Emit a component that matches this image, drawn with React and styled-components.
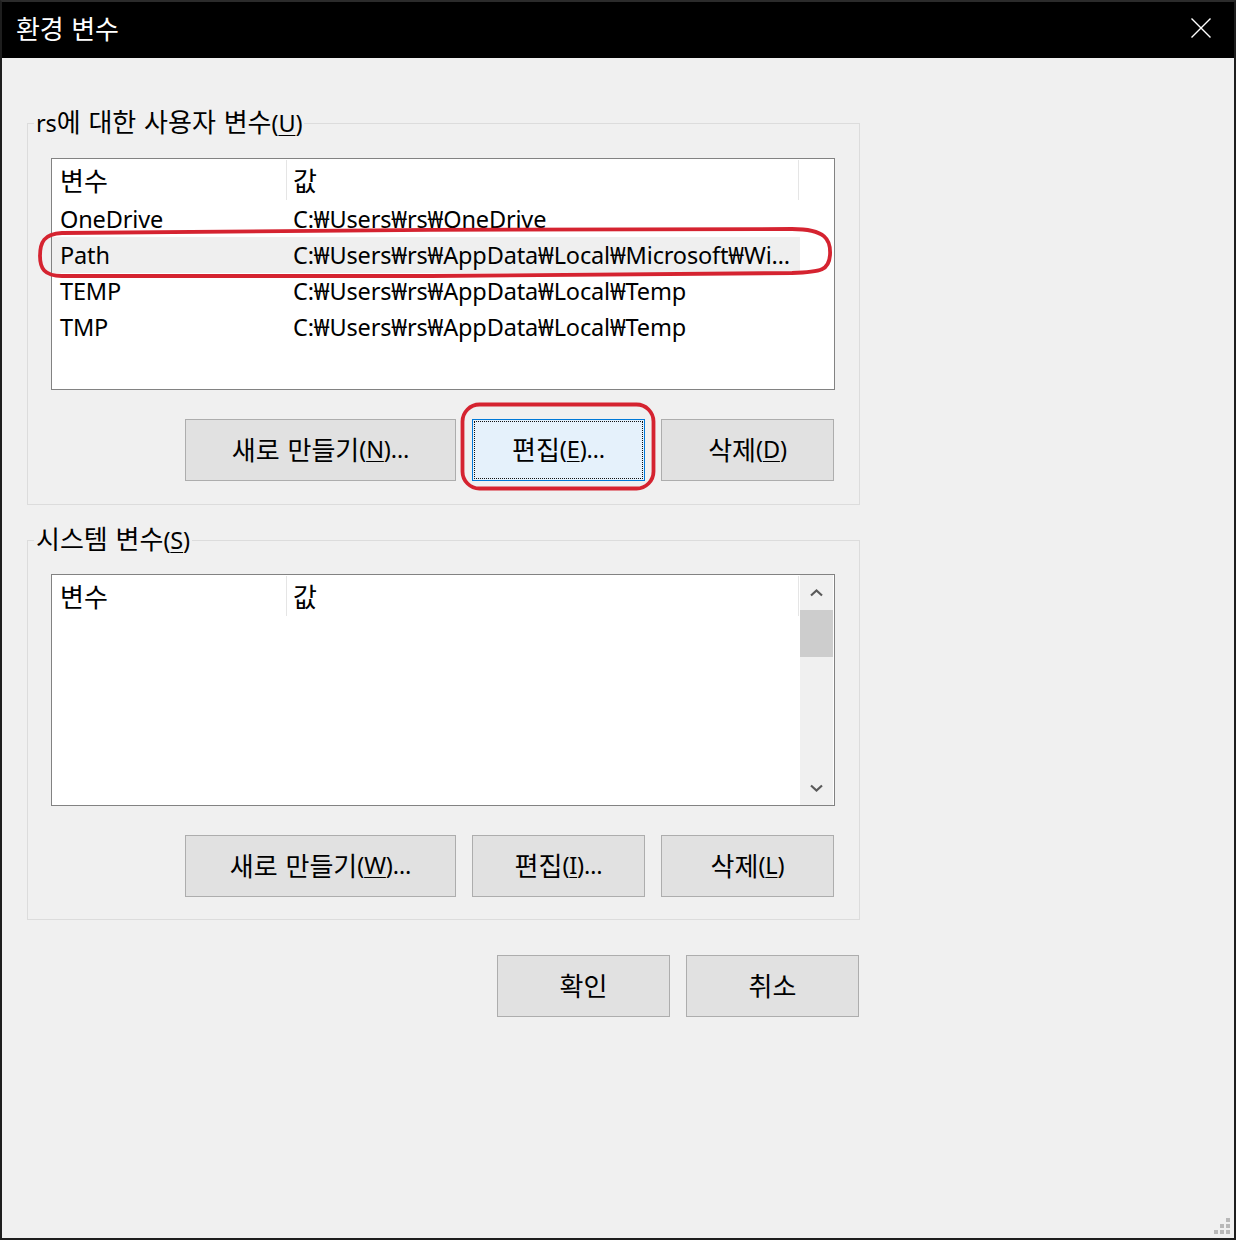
import React from 'react';
import styled, { createGlobalStyle, css } from 'styled-components';

const Global = createGlobalStyle`
  html, body { margin: 0; padding: 0; background: #f0f0f0; }
  body { font-family: "Noto Sans", "Noto Sans CJK KR", sans-serif; }
  * { box-sizing: border-box; }
`;

const Root = styled.div`
  position: relative;
  width: 1236px;
  height: 1240px;
`;

const Window = styled.div`
  position: relative;
  width: 1236px;
  height: 1240px;
  border: 2px solid #1e1e1e;
  border-top-color: #2b2b2b;
  background: #f0f0f0;
  display: flex;
  flex-direction: column;
  overflow: hidden;
  font-family: "Noto Sans", "Noto Sans CJK KR", sans-serif;
  font-size: 23.5px;
  letter-spacing: -0.15px;
  color: #000;
`;

const Ko = styled.span`
  font-family: "Noto Sans CJK KR", sans-serif;
  font-size: 26px;
  letter-spacing: 0;
  word-spacing: 2px;
`;

const TitleBar = styled.div`
  height: 56px;
  flex: none;
  background: #000;
  color: #fff;
  display: flex;
  align-items: center;
  justify-content: space-between;
  padding: 0 23px 4px 14px;
`;

const Title = styled.span`
  font-family: "Noto Sans CJK KR", sans-serif;
  font-size: 26px;
  line-height: 1;
  word-spacing: 2px;
`;

const CloseIcon = styled.svg`
  width: 20px;
  height: 20px;
`;

const Body = styled.div`
  flex: 1;
  display: flex;
  flex-direction: column;
  align-items: flex-start;
  padding: 65px 0 0 25px;
`;

const Group = styled.section`
  position: relative;
  width: 833px;
  border: 1px solid #dcdcdc;
  padding: ${p => p.$pt}px 24px ${p => p.$pb}px 23px;
  margin-top: ${p => p.$mt}px;
`;

const GroupLabel = styled.div`
  position: absolute;
  top: -21px;
  left: 6px;
  padding: 0 2px;
  background: #f0f0f0;
  line-height: 36px;
  white-space: nowrap;
`;

const Mn = styled.span`
  text-decoration: underline;
  text-decoration-thickness: 1px;
  text-underline-offset: 3px;
`;

const ListBox = styled.div`
  width: 784px;
  height: 232px;
  border: 1px solid #828282;
  background: #fff;
  display: flex;
`;

const ListMain = styled.div`
  width: 748px;
  display: flex;
  flex-direction: column;
`;

const Header = styled.div`
  height: 42px;
  display: flex;
  flex: none;
`;

const HeaderCell = styled.div`
  width: ${p => p.$w}px;
  padding-left: ${p => p.$pl}px;
  display: flex;
  align-items: center;
  border-right: 1px solid #e5e5e5;
  margin: 1px 0;
  padding-bottom: 2px;
`;

const Row = styled.div`
  height: 36px;
  display: flex;
  align-items: center;
  padding-bottom: 1px;
  background: ${p => (p.$selected ? '#efefef' : 'transparent')};
`;

const Cell = styled.div`
  width: ${p => p.$w}px;
  padding-left: ${p => p.$pl}px;
  white-space: nowrap;
  overflow: hidden;
`;

const ScrollBar = styled.div`
  width: 33px;
  margin-right: 1px;
  background: #f0f0f0;
  display: flex;
  flex-direction: column;
`;

const ScrollArrow = styled.div`
  height: 35px;
  flex: none;
  display: flex;
  align-items: center;
  justify-content: center;
`;

const Thumb = styled.div`
  height: 47px;
  flex: none;
  background: #cdcdcd;
`;

const Track = styled.div`
  flex: 1;
`;

const ButtonRow = styled.div`
  display: flex;
  justify-content: flex-end;
  gap: 16px;
  margin-top: ${p => p.$mt}px;
  padding-right: ${p => p.$pr}px;
  width: ${p => (p.$w ? `${p.$w}px` : 'auto')};
`;

const Button = styled.div`
  position: relative;
  width: ${p => p.$w}px;
  height: 62px;
  background: #e1e1e1;
  border: 1px solid #adadad;
  display: flex;
  align-items: center;
  justify-content: center;
  padding-bottom: 3px;
  white-space: nowrap;
  ${p =>
    p.$focused &&
    css`
      background: #e5f1fb;
      border-color: #0078d7;
      &::after {
        content: '';
        position: absolute;
        inset: 1px;
        border: 1px dotted #111;
      }
    `}
`;

const Overlay = styled.svg`
  position: absolute;
  left: 0;
  top: 0;
  pointer-events: none;
`;

const Grip = styled.svg`
  position: absolute;
  right: 4px;
  bottom: 4px;
  width: 16px;
  height: 16px;
`;

const userVars = [
  { name: 'OneDrive', value: 'C:₩Users₩rs₩OneDrive' },
  { name: 'Path', value: 'C:₩Users₩rs₩AppData₩Local₩Microsoft₩Wi…', selected: true },
  { name: 'TEMP', value: 'C:₩Users₩rs₩AppData₩Local₩Temp' },
  { name: 'TMP', value: 'C:₩Users₩rs₩AppData₩Local₩Temp' },
];

function ListHeader() {
  return (
    <Header>
      <HeaderCell $w={235} $pl={8}><Ko>변수</Ko></HeaderCell>
      <HeaderCell $w={512} $pl={6}><Ko>값</Ko></HeaderCell>
    </Header>
  );
}

function Chevron({ down }) {
  return (
    <svg width="13" height="8" viewBox="0 0 13 8">
      <polyline
        points={down ? '1,1.5 6.5,6.5 12,1.5' : '1,6.5 6.5,1.5 12,6.5'}
        fill="none"
        stroke="#5a5a5a"
        strokeWidth="2.2"
      />
    </svg>
  );
}

export default function App() {
  return (
    <Root>
      <Global />
      <Window>
        <TitleBar>
          <Title>환경 변수</Title>
          <CloseIcon viewBox="0 0 20 20">
            <path d="M0.5 0.5 L19.5 19.5 M19.5 0.5 L0.5 19.5" stroke="#fff" strokeWidth="1.4" />
          </CloseIcon>
        </TitleBar>
        <Body>
          <Group $mt={0} $pt={34} $pb={23}>
            <GroupLabel>
              rs<Ko>에 대한 사용자 변수</Ko>(<Mn>U</Mn>)
            </GroupLabel>
            <ListBox>
              <ListMain>
                <ListHeader />
                {userVars.map(v => (
                  <Row key={v.name} $selected={v.selected}>
                    <Cell $w={235} $pl={8}>{v.name}</Cell>
                    <Cell $w={512} $pl={6}>{v.value}</Cell>
                  </Row>
                ))}
              </ListMain>
            </ListBox>
            <ButtonRow $mt={29} $pr={1}>
              <Button $w={271}><Ko>새로 만들기</Ko>(<Mn>N</Mn>)…</Button>
              <Button $w={173} $focused><Ko>편집</Ko>(<Mn>E</Mn>)…</Button>
              <Button $w={173}><Ko>삭제</Ko>(<Mn>D</Mn>)</Button>
            </ButtonRow>
          </Group>

          <Group $mt={35} $pt={33} $pb={22}>
            <GroupLabel>
              <Ko>시스템 변수</Ko>(<Mn>S</Mn>)
            </GroupLabel>
            <ListBox>
              <ListMain>
                <ListHeader />
              </ListMain>
              <ScrollBar>
                <ScrollArrow><Chevron /></ScrollArrow>
                <Thumb />
                <Track />
                <ScrollArrow><Chevron down /></ScrollArrow>
              </ScrollBar>
            </ListBox>
            <ButtonRow $mt={29} $pr={1}>
              <Button $w={271}><Ko>새로 만들기</Ko>(<Mn>W</Mn>)…</Button>
              <Button $w={173}><Ko>편집</Ko>(<Mn>I</Mn>)…</Button>
              <Button $w={173}><Ko>삭제</Ko>(<Mn>L</Mn>)</Button>
            </ButtonRow>
          </Group>

          <ButtonRow $mt={35} $pr={1} $w={833}>
            <Button $w={173}><Ko>확인</Ko></Button>
            <Button $w={173}><Ko>취소</Ko></Button>
          </ButtonRow>
        </Body>
        <Grip viewBox="0 0 16 16">
          <g fill="#b8b8b8">
            <rect x="12" y="0" width="4" height="4" />
            <rect x="6" y="6" width="4" height="4" />
            <rect x="12" y="6" width="4" height="4" />
            <rect x="0" y="12" width="4" height="4" />
            <rect x="6" y="12" width="4" height="4" />
            <rect x="12" y="12" width="4" height="4" />
          </g>
        </Grip>
      </Window>
      <Overlay width="1236" height="1240" viewBox="0 0 1236 1240">
        <path
          d="M62 233 C250 231 600 228 792 229 C826 229 831 240 830 255 C829 270 822 272 792 273 C600 276 250 277 62 276 C44 276 40 268 40 256 C40 242 44 234 62 233 Z"
          fill="none"
          stroke="#d52330"
          strokeWidth="3.8"
        />
        <rect x="462.5" y="404.5" width="191" height="84" rx="17" fill="none" stroke="#d52330" strokeWidth="3.8" />
      </Overlay>
    </Root>
  );
}
